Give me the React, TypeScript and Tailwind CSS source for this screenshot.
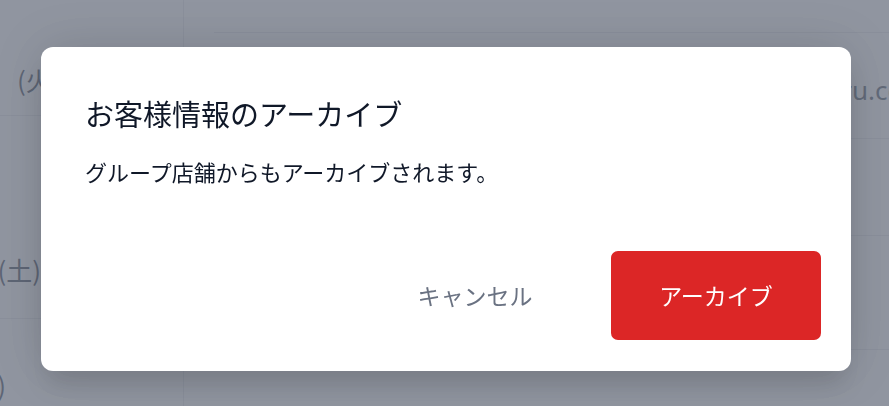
import React from "react";

export default function App() {
  return (
    <div className="relative h-[406px] w-[889px] overflow-hidden bg-white font-['Noto_Sans_CJK_JP','Noto_Sans',sans-serif]">
      {/* underlying page */}
      <div className="flex h-full text-gray-700">
        <div className="flex w-[184px] shrink-0 flex-col border-r border-gray-200">
          <div className="h-[116px] shrink-0 border-b border-gray-200 pl-[17px] pt-[65px] text-[26px] leading-[30px] whitespace-nowrap">
            (火)
          </div>
          <div className="h-[203px] shrink-0 border-b border-gray-200 pt-[139px] text-[26px] leading-[30px]">
            <div className="flex w-[41px] justify-end whitespace-nowrap">12/07(土)</div>
          </div>
          <div className="pt-[51px] text-[26px] leading-[30px]">
            <div className="flex w-[6px] justify-end whitespace-nowrap">(日)</div>
          </div>
        </div>
        <div className="w-[30px] shrink-0" />
        <div className="flex flex-1 flex-col">
          <div className="h-[33px] shrink-0 border-b border-gray-200" />
          <div className="h-[106px] shrink-0 border-b border-gray-200 pt-[42px] text-[26px] leading-[30px] font-['Noto_Sans',sans-serif] text-gray-600">
            <div className="flex whitespace-nowrap">
              <div className="flex w-[638px] shrink-0 justify-end">info@maru-kir</div>
              <div>u.co.jp</div>
            </div>
          </div>
          <div className="h-[97px] shrink-0 border-b border-gray-200" />
          <div className="h-[114px] shrink-0 border-b border-gray-200" />
        </div>
      </div>

      {/* overlay */}
      <div className="fixed inset-0 bg-[#6b7280]/75" />

      {/* dialog */}
      <div className="fixed inset-0 flex items-start pl-[41px] pt-[47px]">
        <div className="flex h-[324px] w-[810px] flex-col rounded-[12px] bg-white shadow-[0_0_50px_rgba(0,0,0,0.14),0_20px_25px_-5px_rgba(0,0,0,0.1)]">
          <div className="px-[44px] pt-[45px]">
            <h2 className="text-[29px] leading-[43px] font-normal text-gray-900">
              お客様情報のアーカイブ
            </h2>
            <p className="mt-[20px] text-[22px] leading-[33px] text-gray-900">
              グループ店舗からもアーカイブされます。
            </p>
          </div>
          <div className="mt-auto flex justify-end gap-[31px] px-[30px] pb-[31px]">
            <button className="flex h-[89px] w-[210px] items-center justify-center text-[23px] text-gray-500">
              キャンセル
            </button>
            <button className="flex h-[89px] w-[210px] items-center justify-center rounded-[7px] bg-[#dc2626] text-[23px] text-white">
              アーカイブ
            </button>
          </div>
        </div>
      </div>
    </div>
  );
}
